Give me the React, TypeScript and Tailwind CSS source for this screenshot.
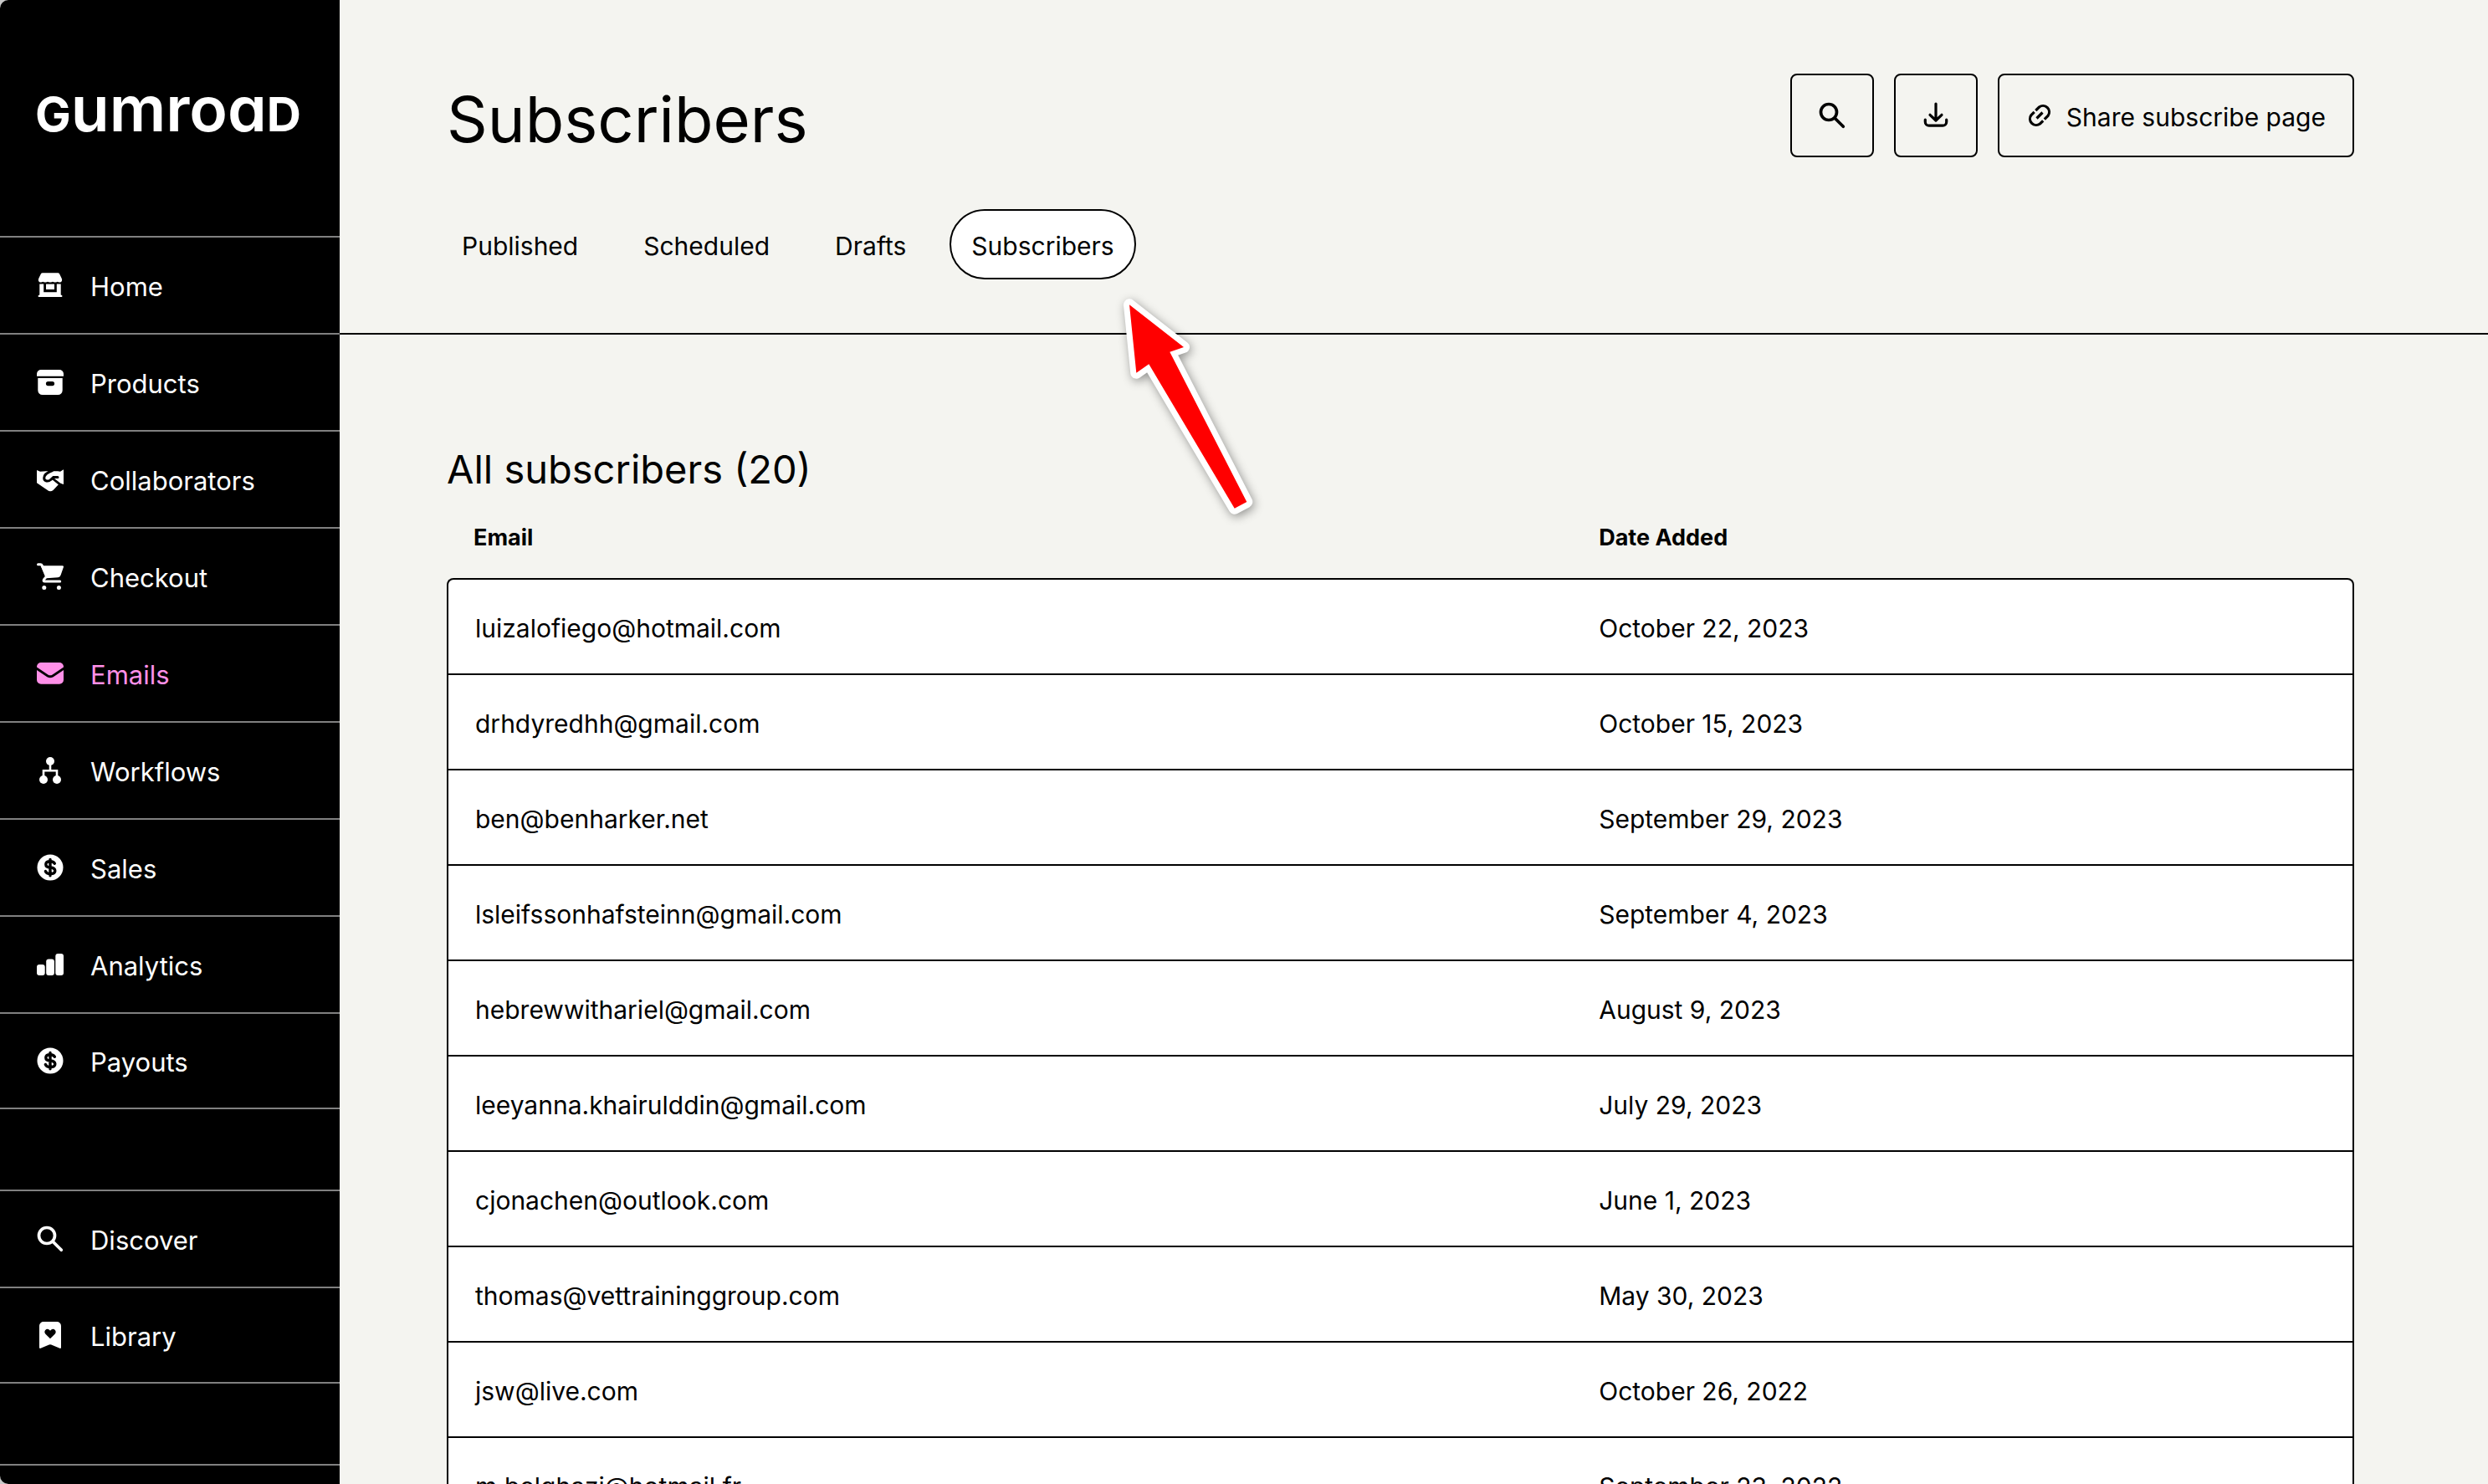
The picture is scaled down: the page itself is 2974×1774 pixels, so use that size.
import type { ReactNode } from "react";

function Icon({ children }: { children: ReactNode }) {
  return (
    <svg viewBox="0 0 32 32" className="size-8 shrink-0" fill="currentColor" aria-hidden="true">
      {children}
    </svg>
  );
}

const HomeIcon = () => (
  <Icon>
    <path d="M7 1.3h18q1.600 0 2.300 1.400l2.400 5q.8 1.800.2 3.200q-.8 1.700-2.700 1.700q-1.600 0-2.400-.8q-.9.800-2.900.8t-2.900-.8q-.9.800-3 .8t-3-.8q-.9.800-2.900.8t-2.900-.8q-.8.800-2.400.8q-1.900 0-2.700-1.700q-.6-1.400.2-3.200l2.400-5q.7-1.400 2.300-1.400z" />
    <path d="M3.300 14.600h4.900v9.700h15.600v-9.700h4.900v13q1.800.3 1.800 1.500q0 1-1.200 1H2.700q-1.200 0-1.200-1q0-1.200 1.800-1.500z" />
    <path d="M11 14.600h10v6.400H11z" />
  </Icon>
);

const ProductsIcon = () => (
  <Icon>
    <path d="M5 1h22a5 5 0 0 1 5 5v2.700H0V6a5 5 0 0 1 5-5z" />
    <path
      fillRule="evenodd"
      d="M1.300 11h29.400v14.500a5.500 5.500 0 0 1-5.500 5.500H6.800a5.500 5.500 0 0 1-5.500-5.500zM13.500 15a2.600 2.600 0 0 0 0 5.200h5a2.600 2.600 0 0 0 0-5.200z"
    />
  </Icon>
);

const HandshakeIcon = () => (
  <Icon>
    <path d="M0 5l4 1.800l7-.6h14l3 .5L32 4.300V22l-4.500-1.500L19.500 29q-3.500 2.600-7-.3L0 20.300z" />
    <path
      d="M18.500 5.500C12 8 8.700 11 8.700 14.200c0 4.200 5 5 7.800 2.300l3.300-2.900h5.200"
      fill="none"
      stroke="#000"
      strokeWidth="3"
      strokeLinecap="round"
    />
    <path d="M19.500 15.500l10.500 8.300" stroke="#000" strokeWidth="2.800" strokeLinecap="round" />
  </Icon>
);

const CartIcon = () => (
  <Icon>
    <path d="M4.500 3.300h26q1.900 0 1.400 1.800L28.600 14.600q-.8 2.600-3.300 2.700L11.500 18.300z" />
    <path
      d="M1.500 1.700h2.900q1.300 0 1.900 1.400L11.500 16.300l-3 3.500q-1.200 2.300 1.200 2.300h18"
      fill="none"
      stroke="currentColor"
      strokeWidth="3"
      strokeLinecap="round"
      strokeLinejoin="round"
    />
    <circle cx="8.800" cy="29.500" r="2.500" />
    <circle cx="26.400" cy="29.500" r="2.500" />
  </Icon>
);

const MailIcon = () => (
  <Icon>
    <path d="M5 3h22a5 5 0 0 1 5 5v.6L18.700 17.500q-2.700 1.700-5.400 0L0 8.600V8a5 5 0 0 1 5-5z" />
    <path d="M0 12l12.300 8.200q3.700 2.300 7.400 0L32 12v11.700a5 5 0 0 1-5 5H5a5 5 0 0 1-5-5z" />
  </Icon>
);

const WorkflowIcon = () => (
  <Icon>
    <circle cx="16" cy="5" r="5" />
    <circle cx="8" cy="27" r="5" />
    <circle cx="24" cy="27" r="5" />
    <path d="M16 5v11M8 27V16.300h16V27" fill="none" stroke="currentColor" strokeWidth="2.600" />
  </Icon>
);

const DollarIcon = () => (
  <Icon>
    <circle cx="16" cy="16" r="15.500" />
    <path
      d="M21.300 11.300q-1.200-2.600-5.200-2.600q-5.300 0-5.300 3.500t5.300 3.800q5.700.4 5.700 4t-5.700 3.600q-4.500 0-5.700-3M16 6.500v19.200"
      fill="none"
      stroke="#000"
      strokeWidth="3.400"
      strokeLinecap="round"
    />
  </Icon>
);

const AnalyticsIcon = () => (
  <Icon>
    <rect x="0" y="16" width="9.700" height="13" rx="3" />
    <rect x="11.200" y="9.500" width="9.700" height="19.500" rx="3" />
    <rect x="22.300" y="3" width="9.700" height="26" rx="3" />
  </Icon>
);

const SearchIcon = () => (
  <Icon>
    <g fill="none" stroke="currentColor" strokeWidth="3.700" strokeLinecap="round">
      <circle cx="12" cy="12" r="9.500" />
      <path d="M19.500 19.500l9.800 9.800" />
    </g>
  </Icon>
);

const LibraryIcon = () => (
  <Icon>
    <path
      fillRule="evenodd"
      d="M8 0h16a5 5 0 0 1 5 5v25.800q0 1.500-1.500 1L17.300 27.500q-1.300-.5-2.600 0L4.500 31.800q-1.500.5-1.500-1V5a5 5 0 0 1 5-5zM16 20.200l5.600-5.500q1.900-2.300.4-4.400q-2.300-2.600-5-.5l-1 1l-1-1q-2.700-2.100-5 .5q-1.500 2.100.4 4.400z"
    />
  </Icon>
);

const DownloadIcon = () => (
  <Icon>
    <g fill="none" stroke="currentColor" strokeWidth="3.200" strokeLinecap="round" strokeLinejoin="round">
      <path d="M16 2v19.500M9 15.300l7 6.700l7-6.700" />
      <path d="M3.300 21v2.700a4.500 4.500 0 0 0 4.500 4.500h16.400a4.500 4.500 0 0 0 4.500-4.500V21" />
    </g>
  </Icon>
);

const LinkIcon = () => (
  <Icon>
    <g fill="none" stroke="currentColor" strokeWidth="3.200" strokeLinecap="butt">
      <path d="M11.300 10.200L15.500 6A7.500 7.500 0 0 1 26 16.500L21.800 20.700" />
      <path d="M9.700 11.800L6 15.500A7.500 7.500 0 0 0 16.500 26L20.200 22.300" />
      <path d="M12.500 19.500l7-7" />
    </g>
  </Icon>
);

type NavEntry = { label: string; icon: () => ReactNode; active?: boolean };

const primaryNav: NavEntry[] = [
  { label: "Home", icon: HomeIcon },
  { label: "Products", icon: ProductsIcon },
  { label: "Collaborators", icon: HandshakeIcon },
  { label: "Checkout", icon: CartIcon },
  { label: "Emails", icon: MailIcon, active: true },
  { label: "Workflows", icon: WorkflowIcon },
  { label: "Sales", icon: DollarIcon },
  { label: "Analytics", icon: AnalyticsIcon },
  { label: "Payouts", icon: DollarIcon },
];

const secondaryNav: NavEntry[] = [
  { label: "Discover", icon: SearchIcon },
  { label: "Library", icon: LibraryIcon },
];

const tabs = ["Published", "Scheduled", "Drafts", "Subscribers"];

const subscribers = [
  ["luizalofiego@hotmail.com", "October 22, 2023"],
  ["drhdyredhh@gmail.com", "October 15, 2023"],
  ["ben@benharker.net", "September 29, 2023"],
  ["lsleifssonhafsteinn@gmail.com", "September 4, 2023"],
  ["hebrewwithariel@gmail.com", "August 9, 2023"],
  ["leeyanna.khairulddin@gmail.com", "July 29, 2023"],
  ["cjonachen@outlook.com", "June 1, 2023"],
  ["thomas@vettraininggroup.com", "May 30, 2023"],
  ["jsw@live.com", "October 26, 2022"],
  ["m.belghazi@hotmail.fr", "September 23, 2022"],
];

function NavGroup({ entries }: { entries: NavEntry[] }) {
  return (
    <ul className="border-b-2 border-[#808080]">
      {entries.map(({ label, icon: Glyph, active }, i) => (
        <li
          key={label}
          className={i === entries.length - 1 ? "h-[114px] border-t-2 border-[#808080]" : "h-[116px] border-t-2 border-[#808080]"}
        >
          <a
            href="#"
            aria-current={active ? "page" : undefined}
            className={
              active
                ? "flex h-full items-center gap-8 px-11 text-[31px] text-[#ff90e8]"
                : "flex h-full items-center gap-8 px-11 text-[31px] text-white"
            }
          >
            <Glyph />
            <span className="pt-1">{label}</span>
          </a>
        </li>
      ))}
    </ul>
  );
}

function Sidebar() {
  return (
    <nav className="flex w-[406px] shrink-0 flex-col overflow-hidden bg-black">
      <a
        href="#"
        className="px-[42px] pt-20 pb-[102px] text-[75px] leading-[100px] font-semibold whitespace-nowrap text-white [font-feature-settings:'cv11']"
      >
        <span className="text-[57px] leading-none font-bold">G</span>umroa
        <span className="text-[57px] leading-none font-bold">D</span>
      </a>
      <NavGroup entries={primaryNav} />
      <div className="mt-24">
        <NavGroup entries={secondaryNav} />
      </div>
      <div className="mt-24 flex-1 border-t-2 border-[#808080]" />
    </nav>
  );
}

function PointerArrow() {
  return (
    <svg
      viewBox="0 0 176 276"
      className="pointer-events-none absolute top-[350px] left-[930px] h-[276px] w-[176px] overflow-visible drop-shadow-[2px_3px_6px_rgba(0,0,0,0.4)]"
      aria-hidden="true"
    >
      <path
        d="M14 14.300L79 65L62.300 70.700L154.300 250L139.700 257.700L37.300 85.300L22.300 95.700Z"
        fill="#fff"
        stroke="#fff"
        strokeWidth="14"
        strokeLinejoin="round"
      />
      <path d="M14 14.300L79 65L62.300 70.700L154.300 250L139.700 257.700L37.300 85.300L22.300 95.700Z" fill="#f00" />
    </svg>
  );
}

function Header() {
  return (
    <header className="border-b-2 border-black pt-[88px] pr-40 pb-16 pl-32">
      <div className="flex items-start justify-between">
        <h1 className="text-[76px] leading-[108px]">Subscribers</h1>
        <div className="flex gap-6">
          <button
            type="button"
            aria-label="Search"
            className="flex size-[100px] items-center justify-center rounded-lg border-2 border-black"
          >
            <SearchIcon />
          </button>
          <button
            type="button"
            aria-label="Download"
            className="flex size-[100px] items-center justify-center rounded-lg border-2 border-black"
          >
            <DownloadIcon />
          </button>
          <button
            type="button"
            className="flex h-[100px] items-center gap-4 rounded-lg border-2 border-black px-8 text-[30px]"
          >
            <LinkIcon />
            <span className="pt-1">Share subscribe page</span>
          </button>
        </div>
      </div>
      <div role="tablist" className="mt-[54px] -ml-2 flex gap-[26px]">
        {tabs.map((tab) => {
          const selected = tab === "Subscribers";
          return (
            <button
              key={tab}
              type="button"
              role="tab"
              aria-selected={selected}
              className={
                selected
                  ? "h-[84px] rounded-full border-2 border-black bg-white px-6 pt-1 text-[30px]"
                  : "h-[84px] rounded-full border-2 border-transparent px-6 pt-1 text-[30px]"
              }
            >
              {tab}
            </button>
          );
        })}
      </div>
    </header>
  );
}

function SubscriberTable() {
  return (
    <section className="pt-32 pr-40 pl-32">
      <h2 id="subscribers-heading" className="text-[47px] leading-[66px]">
        All subscribers (20)
      </h2>
      <table aria-labelledby="subscribers-heading" className="w-full table-fixed border-separate border-spacing-0 text-left">
        <thead className="text-[27px] leading-[33px]">
          <tr>
            <th scope="col" className="w-[59%] px-8 py-8 font-bold">
              Email
            </th>
            <th scope="col" className="px-8 py-8 font-bold">
              Date Added
            </th>
          </tr>
        </thead>
        <tbody className="text-[30px] leading-[44px]">
          {subscribers.map(([email, date]) => (
            <tr key={email} className="group">
              <td className="border-b-2 border-l-2 border-black bg-white px-8 pt-9 pb-8 group-first:rounded-tl-lg group-first:border-t-2">
                {email}
              </td>
              <td className="border-r-2 border-b-2 border-black bg-white px-8 pt-9 pb-8 group-first:rounded-tr-lg group-first:border-t-2">
                {date}
              </td>
            </tr>
          ))}
        </tbody>
      </table>
    </section>
  );
}

export default function App() {
  return (
    <div className="h-screen bg-[#c8c8c8]">
      <div className="flex h-full overflow-hidden rounded-l-[10px] bg-[#f4f4f0] font-['Inter',sans-serif] text-black">
        <Sidebar />
        <main className="relative min-w-0 flex-1 overflow-y-auto [scrollbar-width:none]">
          <Header />
          <SubscriberTable />
          <PointerArrow />
        </main>
      </div>
    </div>
  );
}
